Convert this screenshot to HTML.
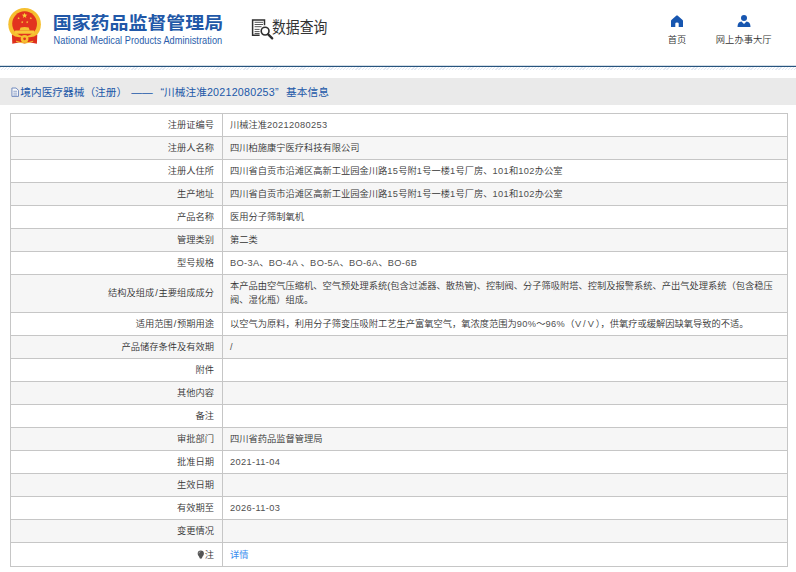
<!DOCTYPE html>
<html lang="zh-CN">
<head>
<meta charset="utf-8">
<title>国家药品监督管理局 数据查询</title>
<style>
html,body{margin:0;padding:0;}
body{width:796px;height:572px;overflow:hidden;background:#fff;position:relative;
  font-family:"Liberation Sans","Noto Sans CJK SC",sans-serif;color:#333;}
.abs{position:absolute;white-space:nowrap;}
#hdr{position:absolute;left:0;top:0;width:796px;height:64px;background:#fff;}
#logo{left:0;top:0;width:48px;height:48px;}
#t1{left:52.7px;top:10.1px;font-size:18.95px;line-height:26px;font-weight:700;color:#2158a8;letter-spacing:0;transform:scaleY(0.93);transform-origin:50% 50%;}
#t2{left:53.6px;top:34.5px;font-size:9.2px;letter-spacing:0.04px;line-height:12px;color:#2a5dab;transform:scaleY(1.13);transform-origin:0 78%;}
#qicon{left:240px;top:0;width:40px;height:48px;}
#qtxt{left:272.2px;top:17.2px;font-size:16px;line-height:22px;color:#333;transform:scaleX(0.865);transform-origin:0 0;}
#home{left:669px;top:14px;width:16px;height:14px;}
#hometxt{left:667.8px;top:33.5px;font-size:9.25px;font-weight:350;line-height:12px;color:#333;}
#user{left:736px;top:14.3px;width:16px;height:14px;}
#usertxt{left:715.8px;top:33.5px;font-size:9.3px;font-weight:350;line-height:12px;color:#333;}
#line{position:absolute;left:0;top:65px;width:796px;height:2px;background:linear-gradient(#d3dde6 0 50%,#27547e 50% 100%);}
#hatch{position:absolute;left:0;top:67px;width:796px;height:3px;
  background:repeating-linear-gradient(135deg,#e3e9f4 0 0.9px,#fff 0.9px 2.2px);}
#bar{position:absolute;left:0;top:78px;width:796px;height:27px;background:#eaeaea;}
#bartxt{left:20.3px;top:84.5px;font-size:10.7px;line-height:15px;color:#2158a8;}
#bartxt span{display:inline-block;}
.b2{margin-left:4px;}
.b3{margin-left:8px;}
.b4{margin-left:7.5px;}
.bl{letter-spacing:0.25px;}
#baricon{left:10.5px;top:86.7px;width:8.4px;height:10.4px;}
table{position:absolute;left:10px;top:113px;width:778px;border-collapse:collapse;table-layout:fixed;
  font-size:9.25px;line-height:16px;color:#333;font-weight:350;}
td{border:1px solid #c6c6c6;padding:0.5px 7px 0;height:23px;vertical-align:middle;box-sizing:border-box;}
td.k{width:212px;text-align:right;padding-right:8px;}
tr.two td{height:38px;line-height:13.5px;}
tr:last-child td{height:24px;}
.l{letter-spacing:0.35px;color:#505050;}
tr:nth-child(even) td{background:#f6f6f6;}
tr.h td{height:23px;}
a{color:#3b8cee;text-decoration:none;font-weight:400;}
.bulb{width:7.6px;height:9.5px;vertical-align:-1.3px;margin-right:0.3px;}
.sl{margin:0 0.8px;}
</style>
</head>
<body>
<div id="hdr">
  <svg id="logo" class="abs" viewBox="0 0 48 48">
    <circle cx="24.6" cy="24.3" r="16.3" fill="#f6bf2f"/>
    <circle cx="24.6" cy="23.7" r="12.4" fill="#e2331f"/>
    <polygon points="24.60,12.70 25.32,14.61 27.36,14.70 25.76,15.98 26.30,17.95 24.60,16.82 22.90,17.95 23.44,15.98 21.84,14.70 23.88,14.61" fill="#f9d43a"/>
    <polygon points="18.60,17.00 18.92,17.86 19.84,17.90 19.12,18.47 19.36,19.35 18.60,18.85 17.84,19.35 18.08,18.47 17.36,17.90 18.28,17.86" fill="#f9d43a"/><polygon points="22.20,20.80 22.52,21.66 23.44,21.70 22.72,22.27 22.96,23.15 22.20,22.65 21.44,23.15 21.68,22.27 20.96,21.70 21.88,21.66" fill="#f9d43a"/><polygon points="27.20,20.80 27.52,21.66 28.44,21.70 27.72,22.27 27.96,23.15 27.20,22.65 26.44,23.15 26.68,22.27 25.96,21.70 26.88,21.66" fill="#f9d43a"/><polygon points="30.80,17.00 31.12,17.86 32.04,17.90 31.32,18.47 31.56,19.35 30.80,18.85 30.04,19.35 30.28,18.47 29.56,17.90 30.48,17.86" fill="#f9d43a"/>
    <path d="M19.4 30.4 L20.6 27.6 Q24.6 26.4 28.6 27.6 L29.8 30.4 Z" fill="#f6c234"/>
    <rect x="15" y="30.4" width="19.2" height="3.4" rx="0.6" fill="#f8c93a"/>
    <path d="M11.9 34.6 Q15 37.6 20.6 37.2 L28.6 37.2 Q34.2 37.6 37.3 34.6 L36.9 43.7 L29.2 42.3 Q24.6 44.6 20 42.3 L12.3 43.7 Z" fill="#de2f1d"/>
    <circle cx="24.6" cy="38.8" r="3.9" fill="#f6bf2f"/>
    <circle cx="24.6" cy="38.8" r="1.4" fill="#e0321f"/>
    <path d="M16 41.2 Q24.6 44.6 33.2 41.2" stroke="#f6c234" stroke-width="1" fill="none"/>
  </svg>
  <div id="t1" class="abs">国家药品监督管理局</div>
  <div id="t2" class="abs">National Medical Products Administration</div>
  <svg id="qicon" class="abs" viewBox="0 0 40 48" fill="none" stroke="#2e2e2e">
    <path d="M24.5 25.2 V20.1 H12.6 V35.2 H19.6" stroke-width="1.5"/>
    <path d="M14.6 22.3 H23 M14.6 24.5 H23 M14.6 26.7 H21.5 M14.6 29.4 H19.6 M14.6 31.6 H19.6 M14.6 33.5 H19.6" stroke-width="0.9" stroke="#444"/>
    <circle cx="25.1" cy="31.1" r="3.9" stroke-width="1.6" fill="#fff"/>
    <path d="M28.2 34.4 L32.2 38.4" stroke-width="2.3" stroke-linecap="round"/>
  </svg>
  <div id="qtxt" class="abs">数据查询</div>
  <svg id="home" class="abs" viewBox="0 0 16 14"><path d="M8 1.2 Q8.3 1.2 8.8 1.7 L13.6 6 Q14 6.4 14 7 V13 H9.7 V9.6 Q9.7 8.4 8 8.4 Q6.3 8.4 6.3 9.6 V13 H2 V7 Q2 6.4 2.4 6 L7.2 1.7 Q7.7 1.2 8 1.2 Z" fill="#1756b0"/></svg>
  <div id="hometxt" class="abs">首页</div>
  <svg id="user" class="abs" viewBox="0 0 16 14"><circle cx="8" cy="4" r="3" fill="#1756b0"/><path d="M1.5 13 Q1.5 8 5.5 7.6 L8 10 L10.5 7.6 Q14.5 8 14.5 13 Z" fill="#1756b0"/></svg>
  <div id="usertxt" class="abs">网上办事大厅</div>
</div>
<div id="line"></div>
<div id="hatch"></div>
<div id="bar"></div>
<svg id="baricon" class="abs" viewBox="0 0 9 10" fill="none" stroke="#5a78b5" stroke-width="0.9"><path d="M1 0.5 H5.5 L8 3 V9.5 H1 Z" fill="#fafafa"/><path d="M2.5 4 H6.5 M2.5 6 H6.5 M2.5 8 H6.5" stroke-width="0.7"/></svg>
<div id="bartxt" class="abs"><span>境内医疗器械（注册）</span><span class="b2">——</span><span class="b3">“川械注准<span class="bl">20212080253</span>”</span><span class="b4">基本信息</span></div>
<table>
<tr><td class="k">注册证编号</td><td>川械注准<span class="l">20212080253</span></td></tr>
<tr><td class="k">注册人名称</td><td>四川柏施康宁医疗科技有限公司</td></tr>
<tr><td class="k">注册人住所</td><td>四川省自贡市沿滩区高新工业园金川路<span class="l">15</span>号附<span class="l">1</span>号一楼<span class="l">1</span>号厂房、<span class="l">101</span>和<span class="l">102</span>办公室</td></tr>
<tr><td class="k">生产地址</td><td>四川省自贡市沿滩区高新工业园金川路<span class="l">15</span>号附<span class="l">1</span>号一楼<span class="l">1</span>号厂房、<span class="l">101</span>和<span class="l">102</span>办公室</td></tr>
<tr><td class="k">产品名称</td><td>医用分子筛制氧机</td></tr>
<tr><td class="k">管理类别</td><td>第二类</td></tr>
<tr><td class="k">型号规格</td><td><span class="l">BO-3A</span>、<span class="l">BO-4A</span> 、<span class="l">BO-5A</span>、<span class="l">BO-6A</span>、<span class="l">BO-6B</span></td></tr>
<tr class="two"><td class="k">结构及组成<span class="sl">/</span>主要组成成分</td><td>本产品由空气压缩机、空气预处理系统(包含过滤器、散热管)、控制阀、分子筛吸附塔、控制及报警系统、产出气处理系统（包含稳压阀、湿化瓶）组成。</td></tr>
<tr><td class="k">适用范围<span class="sl">/</span>预期用途</td><td>以空气为原料，利用分子筛变压吸附工艺生产富氧空气，氧浓度范围为<span class="l">90%</span>～<span class="l">96%</span>（<span class="l" style="letter-spacing:2px;margin-left:0.5px">V/V</span>），供氧疗或缓解因缺氧导致的不适。</td></tr>
<tr><td class="k">产品储存条件及有效期</td><td><span class="l">/</span></td></tr>
<tr><td class="k">附件</td><td></td></tr>
<tr><td class="k">其他内容</td><td></td></tr>
<tr><td class="k">备注</td><td></td></tr>
<tr><td class="k">审批部门</td><td>四川省药品监督管理局</td></tr>
<tr><td class="k">批准日期</td><td><span class="l">2021-11-04</span></td></tr>
<tr><td class="k">生效日期</td><td></td></tr>
<tr><td class="k">有效期至</td><td><span class="l">2026-11-03</span></td></tr>
<tr><td class="k">变更情况</td><td></td></tr>
<tr><td class="k"><svg class="bulb" viewBox="0 0 8 10"><path d="M4 0.6 A3.3 3.3 0 0 1 7.3 3.9 C7.3 6 5.4 6.6 5.2 8.6 Q4 9.6 2.8 8.6 C2.6 6.6 0.7 6 0.7 3.9 A3.3 3.3 0 0 1 4 0.6 Z" fill="#555"/><path d="M2 3.6 A2 2 0 0 1 3.6 1.8" stroke="#bbb" stroke-width="0.8" fill="none"/></svg>注</td><td><a>详情</a></td></tr>
</table>
</body>
</html>
